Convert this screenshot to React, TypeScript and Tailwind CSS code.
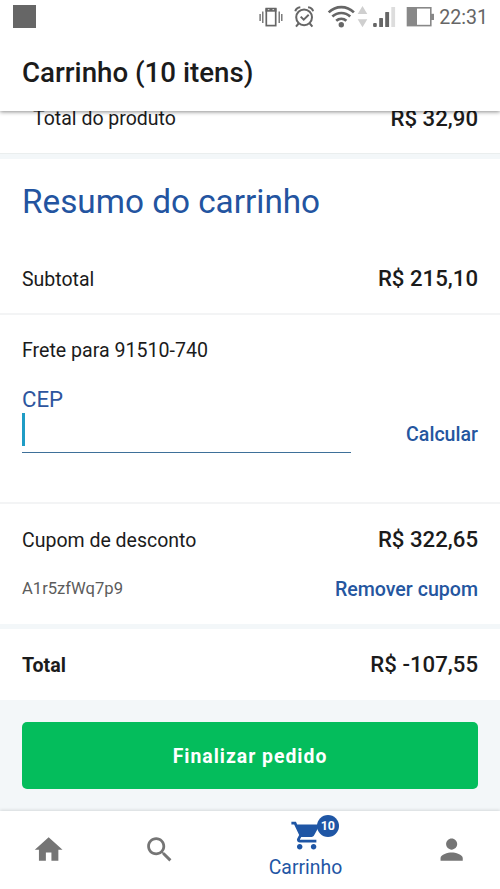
import React from "react";

function StatusBar() {
  return (
    <div className="flex h-[34px] items-start justify-between pl-[13px] pr-[12px] text-[#666]">
      <div className="mt-[5px] size-[23px] bg-[#666]" />
      <svg className="ml-auto h-[34px] w-[180px]" viewBox="255.5 0 180 34" fill="none">
        <g stroke="#666" strokeWidth="1.3">
          <rect x="265.8" y="8.6" width="9.4" height="17" strokeWidth="1.7" />
          <path d="M265 10h11" strokeWidth="3.4" />
          <path d="M267.3 9.6h1.6M272 9.6h1.6" stroke="#ddd" strokeWidth="1" />
          <path d="M262.3 11.5v11.5M278.7 11.5v11.5" />
          <path d="M259.6 14v7M281.3 14v7" />
        </g>
        <g stroke="#666" strokeWidth="2">
          <circle cx="303.6" cy="17.3" r="7.9" />
          <path d="M300.2 16.6l3 3 5-4.8" strokeWidth="2" />
          <path d="M294.8 11.3c.6-2.4 2.3-3.7 5-4M312.6 11.3c-.6-2.4-2.3-3.7-5-4M298.1 23.5l-2.6 3.2M309.3 23.5l2.6 3.2" />
        </g>
        <g stroke="#666" strokeWidth="2.7">
          <path d="M328.2 12.4c7.2-7 18-7 25.2 0" />
          <path d="M331.9 16.6c5.1-4.8 12.7-4.8 17.8 0" />
          <path d="M335.7 20.8c3-2.7 7.2-2.7 10.2 0" />
        </g>
        <circle cx="340.8" cy="24.8" r="2.7" fill="#666" />
        <path d="M362 6l4.8 8h-9.6zM362 27.3l4.8-8h-9.6z" fill="#cfcfcf" />
        <rect x="372.6" y="23" width="3.7" height="4" rx="1" fill="#666" />
        <rect x="378.7" y="18" width="3.8" height="9" rx=".6" fill="#666" />
        <rect x="384.7" y="12" width="3.9" height="15" rx=".6" fill="#666" />
        <rect x="390.8" y="7" width="3.8" height="20" fill="#ddd" />
        <rect x="407" y="7.8" width="23.3" height="17.8" stroke="#888" strokeWidth="1.6" />
        <path d="M407 8h9.5v18H407z" fill="#888" />
        <path d="M430.5 13.8h3v6.2h-3z" fill="#888" />
      </svg>
      <span className="ml-[3px] mt-[6px] text-[19.6px] leading-[23px]">22:31</span>
    </div>
  );
}

function Header() {
  return (
    <header className="relative z-10 h-[111px] shrink-0 bg-white shadow-[0_1px_4px_rgba(0,0,0,0.45)]">
      <StatusBar />
      <h1 className="pl-[22px] pt-[23px] text-[27.7px] font-medium leading-[32px]">Carrinho (10 itens)</h1>
    </header>
  );
}

function Row({ label, value, bold }: { label: string; value: string; bold?: boolean }) {
  return (
    <div className="flex h-[30px] items-center justify-between">
      <span className={bold ? "pt-px text-[19.6px] font-bold" : "pt-px text-[19.5px]"}>{label}</span>
      <span className="text-[22.2px] font-medium">{value}</span>
    </div>
  );
}

function NavIcon({ d }: { d: string }) {
  return (
    <svg className="size-[33.3px]" viewBox="0 0 24 24" fill="currentColor">
      <path d={d} />
    </svg>
  );
}

function BottomNav() {
  return (
    <nav className="relative grid h-[78px] shrink-0 grid-cols-[97px_126px_165px_112px] justify-items-center bg-white text-[#757575] shadow-[0_-1px_3px_rgba(0,0,0,0.12)]">
      <button className="mt-[22px] h-[34px]" aria-label="Início">
        <NavIcon d="M10 20v-6h4v6h5v-8h3L12 3 2 12h3v8z" />
      </button>
      <button className="mt-[22px] h-[34px]" aria-label="Buscar">
        <NavIcon d="M15.5 14h-.79l-.28-.27C15.41 12.59 16 11.11 16 9.5 16 5.91 13.09 3 9.5 3S3 5.91 3 9.5 5.91 16 9.5 16c1.61 0 3.09-.59 4.23-1.57l.27.28v.79l5 4.99L20.49 19l-4.99-5zm-6 0C7.01 14 5 11.99 5 9.5S7.01 5 9.5 5 14 7.01 14 9.5 11.99 14 9.5 14z" />
      </button>
      <button className="flex flex-col items-center pt-[8px] text-[#1f56a5]">
        <span className="relative ml-[3px] h-[34px]">
          <NavIcon d="M7 18c-1.1 0-1.99.9-1.99 2S5.9 22 7 22s2-.9 2-2-.9-2-2-2zM1 2v2h2l3.6 7.59-1.35 2.45c-.16.28-.25.61-.25.96 0 1.1.9 2 2 2h12v-2H7.42c-.14 0-.25-.11-.25-.25l.03-.12.9-1.63h7.45c.75 0 1.41-.41 1.75-1.03l3.58-6.49A1.003 1.003 0 0 0 20 4H5.21l-.94-2H1zm16 16c-1.1 0-1.99.9-1.99 2s.89 2 1.99 2 2-.9 2-2-.9-2-2-2z" />
          <span className="absolute -top-[4px] left-[26.5px] grid size-[22px] place-items-center rounded-full bg-[#1f56a5] text-[12.5px] font-bold leading-none text-white">
            10
          </span>
        </span>
        <span className="mt-[2.5px] text-[19.4px] leading-[23px]">Carrinho</span>
      </button>
      <button className="mt-[22px] h-[34px] pl-[15px]" aria-label="Perfil">
        <NavIcon d="M12 12c2.21 0 4-1.79 4-4s-1.79-4-4-4-4 1.79-4 4 1.79 4 4 4zm0 2c-2.67 0-8 1.34-8 4v2h16v-2c0-2.66-5.33-4-8-4z" />
      </button>
    </nav>
  );
}

export default function App() {
  return (
    <div className="flex h-[889px] w-[500px] flex-col overflow-hidden bg-[#f3f7f9] font-[Roboto,sans-serif] text-[#1b1b1b]">
      <Header />
      <main className="h-[700px] shrink-0">
        <section className="flex h-[43px] items-start justify-between border-b border-[#eaeeee] bg-white pl-[33px] pr-[22px]">
          <span className="-mt-[4px] text-[19.5px] leading-[23px]">Total do produto</span>
          <span className="-mt-[6px] text-[22.2px] font-medium leading-[26px]">R$ 32,90</span>
        </section>
        <section className="mt-[5px] h-[156px] border-b-2 border-[#f3f4f5] bg-white px-[22px] pt-[23px]">
          <h2 className="text-[33.3px] leading-[40px] text-[#2354a0]">Resumo do carrinho</h2>
          <div className="mt-[42px]">
            <Row label="Subtotal" value="R$ 215,10" />
          </div>
        </section>
        <section className="h-[189px] border-b-2 border-[#f3f4f5] bg-white px-[22px] pt-[24px]">
          <p className="text-[19.6px] leading-[23px]">Frete para 91510-740</p>
          <div className="mt-[24px] flex">
            <label className="block h-[67px] w-[329px] border-b border-[#3e7099] text-[22.2px] leading-[27px] text-[#2d559e]">
              CEP
              <span className="block h-[33px] w-[3px] bg-[#1f9cc5]" />
            </label>
            <button className="ml-auto mt-[37px] h-[23px] text-[19.6px] font-medium leading-[23px] text-[#25569f]">Calcular</button>
          </div>
        </section>
        <section className="h-[120px] bg-white px-[22px] pt-[21px]">
          <Row label="Cupom de desconto" value="R$ 322,65" />
          <div className="mt-[20px] flex h-[30px] items-center justify-between">
            <span className="-mt-[2px] text-[16.6px] text-[#5c5c5c]">A1r5zfWq7p9</span>
            <button className="text-[19.6px] font-medium text-[#25569f]">Remover cupom</button>
          </div>
        </section>
        <section className="mt-[5px] h-[71px] bg-white px-[22px] pt-[21px]">
          <Row label="Total" value="R$ -107,55" bold />
        </section>
        <div className="px-[22px] pt-[22px]">
          <button className="h-[67px] w-full rounded-[5px] bg-[#04bd5c] pt-[2px] text-[19.4px] font-bold tracking-[1px] text-white">
            Finalizar pedido
          </button>
        </div>
      </main>
      <BottomNav />
    </div>
  );
}
